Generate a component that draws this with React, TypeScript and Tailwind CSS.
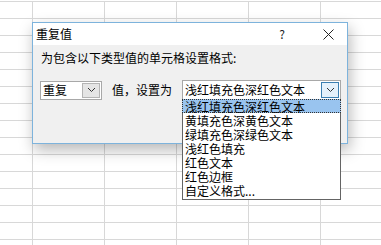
const cols = [33, 72, 72, 72, 72, 72];
const rows = Array.from({ length: 15 }, (_, i) => i);
const items = [
  "浅红填充色深红色文本",
  "黄填充色深黄色文本",
  "绿填充色深绿色文本",
  "浅红色填充",
  "红色文本",
  "红色边框",
  "自定义格式...",
];

function Chevron() {
  return (
    <svg width="9" height="6" viewBox="0 0 9 6">
      <path d="M1 1 L4.5 4.5 L8 1" fill="none" stroke="#333" strokeWidth="1" />
    </svg>
  );
}

export default function App() {
  return (
    <div
      className="relative w-[381px] h-[245px] overflow-hidden bg-white text-[12px] text-black"
      style={{ fontFamily: '"Noto Sans CJK SC", "Noto Sans", sans-serif' }}
    >
      {/* sheet grid */}
      <div className="absolute inset-0 flex flex-col">
        <div className="h-[2px] shrink-0 border-b border-[#d8d8d8]" />
        {rows.map((r) => (
          <div key={r} className="h-[17px] shrink-0 flex border-b border-[#d8d8d8]">
            {cols.map((w, i) => (
              <div key={i} style={{ width: w }} className="h-full shrink-0 border-r border-[#d8d8d8]" />
            ))}
          </div>
        ))}
      </div>

      {/* dialog */}
      <div className="absolute left-[32px] top-[22px] w-[316px] h-[122px] border border-[#7db3dc] bg-[#f0f0f0] shadow-[2px_6px_14px_rgba(0,0,0,0.28)] flex flex-col">
        <div className="h-[22px] bg-white flex items-center pl-[3px]">
          <span className="leading-[16px]">重复值</span>
          <span className="ml-auto leading-[16px] text-[#222] mr-[38px]">?</span>
          <svg width="11" height="11" viewBox="0 0 11 11" className="mr-[13px]">
            <path d="M0.5 0.5 L10.5 10.5 M10.5 0.5 L0.5 10.5" stroke="#222" strokeWidth="1" />
          </svg>
        </div>
        <div className="pl-[8px] pt-[5px] leading-[16px]">为包含以下类型值的单元格设置格式:</div>
        <div className="flex items-center mt-[14px] pl-[7px]">
          <div className="w-[62px] h-[19px] bg-white border border-[#a8a8a8] flex items-center pl-[2px]">
            <span className="leading-[16px]">重复</span>
            <div className="ml-auto mr-[1px] w-[18px] h-[15px] bg-[#e5e5e5] border border-[#b4b4b4] flex items-center justify-center">
              <Chevron />
            </div>
          </div>
          <span className="ml-[10px] leading-[16px]">值，设置为</span>
          <div className="ml-[10px] w-[159px] h-[20px] bg-white border border-[#a8a8a8] flex items-center pl-[2px]">
            <span className="leading-[16px]">浅红填充色深红色文本</span>
            <div className="ml-auto mr-[1px] w-[18px] h-[16px] bg-[#e5f1fb] border border-[#3c7fb1] flex items-center justify-center">
              <Chevron />
            </div>
          </div>
        </div>
      </div>

      {/* open list */}
      <div className="absolute left-[182px] top-[99px] w-[159px] h-[101px] bg-white border border-[#646464] flex flex-col">
        {items.map((t, i) => (
          <div
            key={t}
            className={
              i === 0
                ? "h-[14px] leading-[14px] pl-[2px] bg-[#99c4ef] border border-dotted border-[#333] -mx-[1px] -mt-[1px] mb-[1px] whitespace-nowrap"
                : "h-[14px] leading-[14px] pl-[2px] whitespace-nowrap"
            }
          >
            {t}
          </div>
        ))}
      </div>
    </div>
  );
}
